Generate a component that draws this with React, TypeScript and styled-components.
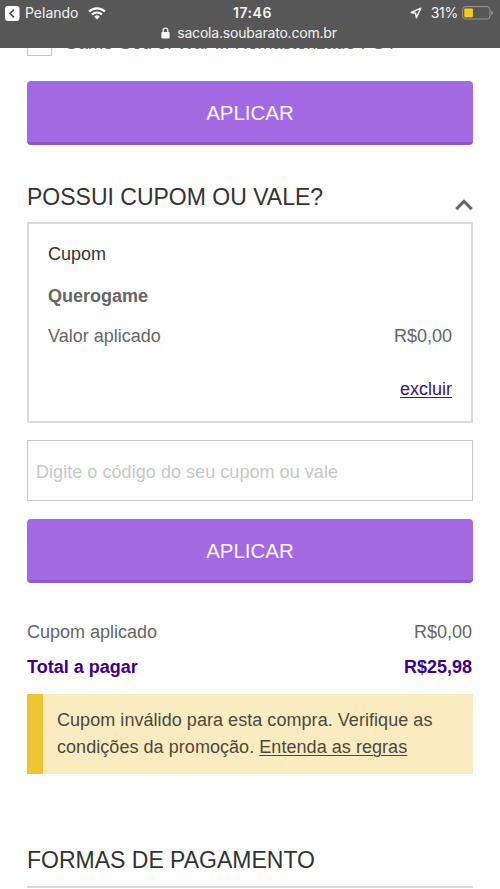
import React from "react";
import styled, { createGlobalStyle } from "styled-components";

const GlobalStyle = createGlobalStyle`
  *, *::before, *::after { box-sizing: border-box; }
  html, body { margin: 0; background: #fefefe; }
  body {
    height: 889px;
    overflow: hidden;
    font-family: "Liberation Sans", Arial, sans-serif;
    font-size: 18px;
    line-height: 20px;
    color: #666;
  }
`;

const Screen = styled.div`
  width: 500px;
  height: 889px;
  overflow: hidden;
  display: flex;
  flex-direction: column;
`;

const BrowserBar = styled.header`
  flex: none;
  height: 48px;
  background: #575757;
  color: #f4f4f4;
  font-family: Inter, Roboto, sans-serif;
`;

const StatusRow = styled.div`
  display: grid;
  grid-template-columns: 1fr auto 1fr;
  align-items: center;
  height: 25px;
  padding: 1px 6px 0 5px;
`;

const StatusGroup = styled.div<{ $end?: boolean }>`
  display: flex;
  align-items: center;
  justify-content: ${(p) => (p.$end ? "flex-end" : "flex-start")};
`;

const BackApp = styled.span`
  margin: 0 9px 0 5px;
  font-size: 14px;
`;

const Clock = styled.span`
  padding-left: 6px;
  font-size: 14px;
  font-weight: 600;
  letter-spacing: 0.5px;
`;

const Percent = styled.span`
  margin: 0 4px 0 9px;
  font-size: 14px;
  letter-spacing: -0.25px;
`;

const AddressRow = styled.div`
  display: flex;
  align-items: center;
  justify-content: center;
  gap: 7px;
  height: 16px;
  padding-right: 2px;
  font-size: 14px;
`;

const Url = styled.span`
  letter-spacing: -0.2px;
`;

const Content = styled.main`
  flex: 1;
  min-height: 0;
  overflow: hidden;
  padding: 0 27px;
  display: flex;
  flex-direction: column;
  & > * { flex: none; }
`;

const ProductRow = styled.div`
  display: flex;
  align-items: flex-end;
  gap: 12px;
  height: 25px;
  margin: -17px 0 25px;
`;

const CheckBox = styled.span`
  width: 25px;
  height: 25px;
  border: 1px solid #c4c4c4;
`;

const ProductName = styled.span`
  padding-bottom: 3px;
  white-space: nowrap;
`;

const ApplyButton = styled.button`
  display: flex;
  align-items: center;
  justify-content: center;
  width: 446px;
  height: 64px;
  padding: 3px 0 0;
  border: 0;
  border-bottom: 3px solid #8c59c2;
  border-radius: 4px;
  background: #a369e3;
  color: #fbf6ff;
  font: 20.5px "Liberation Sans", Arial, sans-serif;
`;

const SectionHeader = styled.div`
  display: flex;
  align-items: center;
  justify-content: space-between;
  height: 30px;
  margin-top: 37px;
`;

const Heading = styled.h2`
  margin: 0;
  font-size: 23px;
  font-weight: 400;
  line-height: 30px;
  color: #333;
  white-space: nowrap;
`;

const CouponCard = styled.section`
  height: 201px;
  margin-top: 10px;
  padding: 20px 19px 0 19px;
  border: 2px solid #dadada;
`;

const Title = styled.div`
  height: 42px;
  color: #333;
`;

const CouponName = styled.div`
  height: 40px;
  font-weight: 700;
`;

const Row = styled.div<{ $total?: boolean }>`
  display: flex;
  justify-content: space-between;
  font-weight: ${(p) => (p.$total ? 700 : 400)};
  color: ${(p) => (p.$total ? "#40008a" : "inherit")};
`;

const RemoveRow = styled.div`
  display: flex;
  justify-content: flex-end;
  margin-top: 33px;
`;

const TextLink = styled.a<{ $tone: string }>`
  color: ${(p) => p.$tone};
  text-decoration: underline;
  text-decoration-thickness: 1px;
  text-underline-offset: 2px;
`;

const CodeInput = styled.input`
  width: 446px;
  height: 61px;
  margin: 17px 0 18px;
  padding: 3px 8px 0;
  border: 1px solid #c8c8c8;
  border-radius: 0;
  background: transparent;
  font: 18px "Liberation Sans", Arial, sans-serif;
  letter-spacing: 0.05px;
  &::placeholder { color: #c8c8c8; opacity: 1; }
`;

const Totals = styled.div`
  display: flex;
  flex-direction: column;
  gap: 15px;
  margin-top: 39px;
  padding-right: 1px;
`;

const Alert = styled.div`
  height: 80px;
  margin-top: 17px;
  padding: 13px 0 0 14px;
  border-left: 16px solid #efc532;
  background: #faecc0;
  color: #4c483e;
  line-height: 27px;
  letter-spacing: 0.05px;
  white-space: nowrap;
`;

const PaymentHeader = styled.div`
  height: 43px;
  margin-top: 71px;
  border-bottom: 2px solid #dadada;
`;

const BackIcon = () => (
  <svg width="15" height="15" viewBox="0 0 15 15">
    <rect width="14.5" height="15" rx="3" fill="#fff" />
    <path d="M9 3.7 5 7.5 9 11.3" fill="none" stroke="#4b4b4b" strokeWidth="1.7" />
  </svg>
);

const WifiIcon = () => (
  <svg width="18" height="13" viewBox="0 0 18 13">
    <g fill="none" stroke="#fff" strokeWidth="2.1">
      <path d="M1.1 4.6a11.3 11.3 0 0 1 15.8 0" />
      <path d="M4 7.5a7.2 7.2 0 0 1 10 0" />
    </g>
    <path d="M6.2 9.7a4 4 0 0 1 5.6 0L9 12.5Z" fill="#fff" />
  </svg>
);

const LocationIcon = () => (
  <svg width="12" height="12" viewBox="0 0 12 12">
    <path d="M10.8 1.1 1.2 5.5l4.4.8.8 4.5Z" fill="none" stroke="#f4f4f4" strokeWidth="1.4" strokeLinejoin="round" />
  </svg>
);

const BatteryIcon = () => (
  <svg width="32" height="14" viewBox="0 0 32 14">
    <rect x=".6" y=".6" width="27.4" height="12.4" rx="3" fill="none" stroke="#999" />
    <rect x="2.3" y="2.4" width="8.6" height="8.8" rx="1" fill="#fdcc12" />
    <path d="M29.4 4.8c2.1.6 2.1 3.6 0 4.2Z" fill="#999" />
  </svg>
);

const LockIcon = () => (
  <svg width="9" height="12" viewBox="0 0 9 12">
    <rect x=".4" y="5" width="8.2" height="6.4" rx="1" fill="#f4f4f4" />
    <path d="M2.2 5.5V3.4a2.3 2.3 0 0 1 4.6 0v2.1" fill="none" stroke="#f4f4f4" strokeWidth="1.3" />
  </svg>
);

const Chevron = styled.svg`
  margin-top: 15px;
`;

export default function App() {
  return (
    <Screen>
      <GlobalStyle />
      <BrowserBar>
        <StatusRow>
          <StatusGroup>
            <BackIcon />
            <BackApp>Pelando</BackApp>
            <WifiIcon />
          </StatusGroup>
          <Clock>17:46</Clock>
          <StatusGroup $end>
            <LocationIcon />
            <Percent>31%</Percent>
            <BatteryIcon />
          </StatusGroup>
        </StatusRow>
        <AddressRow>
          <LockIcon />
          <Url>sacola.soubarato.com.br</Url>
        </AddressRow>
      </BrowserBar>
      <Content>
        <ProductRow>
          <CheckBox />
          <ProductName>Game God of War III Remasterizado PS4</ProductName>
        </ProductRow>
        <ApplyButton>APLICAR</ApplyButton>
        <SectionHeader>
          <Heading>POSSUI CUPOM OU VALE?</Heading>
          <Chevron width="18" height="12" viewBox="0 0 18 12">
            <path d="M1.3 10.1 9 2.4l7.7 7.7" fill="none" stroke="#666" strokeWidth="3" />
          </Chevron>
        </SectionHeader>
        <CouponCard>
          <Title>Cupom</Title>
          <CouponName>Querogame</CouponName>
          <Row>
            <span>Valor aplicado</span>
            <span>R$0,00</span>
          </Row>
          <RemoveRow>
            <TextLink $tone="#40107f">excluir</TextLink>
          </RemoveRow>
        </CouponCard>
        <CodeInput placeholder="Digite o código do seu cupom ou vale" />
        <ApplyButton>APLICAR</ApplyButton>
        <Totals>
          <Row>
            <span>Cupom aplicado</span>
            <span>R$0,00</span>
          </Row>
          <Row $total>
            <span>Total a pagar</span>
            <span>R$25,98</span>
          </Row>
        </Totals>
        <Alert>
          Cupom inválido para esta compra. Verifique as
          <br />
          condições da promoção. <TextLink $tone="#4c483e">Entenda as regras</TextLink>
        </Alert>
        <PaymentHeader>
          <Heading>FORMAS DE PAGAMENTO</Heading>
        </PaymentHeader>
      </Content>
    </Screen>
  );
}
